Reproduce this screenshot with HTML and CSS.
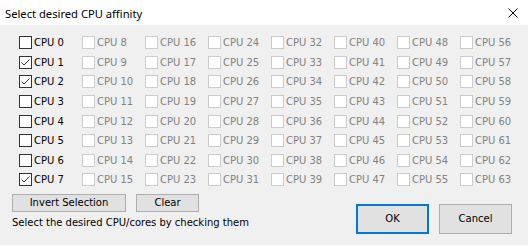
FILE: index.html
```html
<!DOCTYPE html>
<html>
<head>
<meta charset="utf-8">
<link rel="stylesheet" href="styles.css">
</head>
<body>
<div class="window">
  <div class="titlebar">
    <span class="title">Select desired CPU affinity</span>
    <svg class="close" width="10" height="10" viewBox="0 0 10 10"><path d="M0.5 0.5 L9.5 9.5 M9.5 0.5 L0.5 9.5" stroke="#000" stroke-width="1" fill="none"/></svg>
  </div>
  <div class="content">
    <div class="grid" id="grid"></div>
    <div class="footer">
      <div class="left">
        <div class="btnrow">
          <button class="btn invert">Invert Selection</button>
          <button class="btn clear">Clear</button>
        </div>
        <div class="hint">Select the desired CPU/cores by checking them</div>
      </div>
      <div class="right">
        <button class="btn big ok">OK</button>
        <button class="btn big">Cancel</button>
      </div>
    </div>
  </div>
</div>
<script src="app.js"></script>
</body>
</html>
```
FILE: app.js
```js
var grid = document.getElementById('grid');
var checked = {1: true, 2: true, 7: true};
for (var i = 0; i < 64; i++) {
  var cell = document.createElement('div');
  cell.className = 'cell' + (i >= 8 ? ' disabled' : '');
  var box = document.createElement('span');
  box.className = 'box';
  if (checked[i]) {
    box.innerHTML = '<svg width="11" height="11" viewBox="0 0 11 11"><path d="M1.5 5.5 L4 8 L9.5 2.5" stroke="#333" stroke-width="1" fill="none"/></svg>';
  }
  var label = document.createElement('span');
  label.className = 'label';
  label.textContent = 'CPU ' + i;
  cell.appendChild(box);
  cell.appendChild(label);
  grid.appendChild(cell);
}
```
FILE: styles.css
```css
html, body {
  margin: 0;
  padding: 0;
}
body {
  width: 529px;
  height: 246px;
  overflow: hidden;
  background: #ffffff;
}
.window {
  width: 528px;
  height: 245px;
  background: #f0f0f0;
  display: flex;
  flex-direction: column;
  font-family: "DejaVu Sans", sans-serif;
  font-size: 10px;
  color: #000;
}
.titlebar {
  height: 25px;
  background: #fff;
  display: flex;
  align-items: center;
  justify-content: space-between;
  padding: 0 10px 0 5px;
}
.title {
  font-family: "Noto Sans", sans-serif;
  font-size: 11.2px;
  margin-top: 2px;
}
.close {
  display: block;
  margin-top: 1px;
}
.content {
  flex: 1;
  display: flex;
  flex-direction: column;
}
.grid {
  display: grid;
  grid-template-columns: repeat(8, 63px);
  grid-template-rows: repeat(8, 19.57px);
  grid-auto-flow: column;
  padding: 8px 0 0 19px;
}
.cell {
  display: flex;
  align-items: center;
  height: 19.57px;
}
.box {
  width: 11px;
  height: 11px;
  border: 1px solid #333;
  background: #fff;
  display: flex;
  align-items: center;
  justify-content: center;
  flex: none;
}
.box svg {
  display: block;
}
.label {
  margin-left: 2px;
  line-height: 13px;
  white-space: nowrap;
}
.disabled .box {
  border-color: #cccccc;
}
.disabled .label {
  color: #838383;
}
.footer {
  display: flex;
  justify-content: space-between;
  padding: 0 16px 0 12px;
}
.left {
  display: flex;
  flex-direction: column;
  padding-top: 4px;
}
.btnrow {
  display: flex;
  gap: 10px;
}
.btn {
  font-family: "DejaVu Sans", sans-serif;
  font-size: 10px;
  background: #e1e1e1;
  border: 1px solid #adadad;
  color: #000;
  padding: 0;
  margin: 0;
  height: 18px;
  line-height: 14px;
}
.invert {
  width: 114px;
}
.clear {
  width: 63px;
}
.hint {
  margin-top: 4px;
  line-height: 14px;
  white-space: nowrap;
}
.right {
  display: flex;
  gap: 10px;
  padding-top: 14px;
}
.big {
  width: 73px;
  height: 30px;
}
.ok {
  border: 2px solid #0078d7;
}
```
